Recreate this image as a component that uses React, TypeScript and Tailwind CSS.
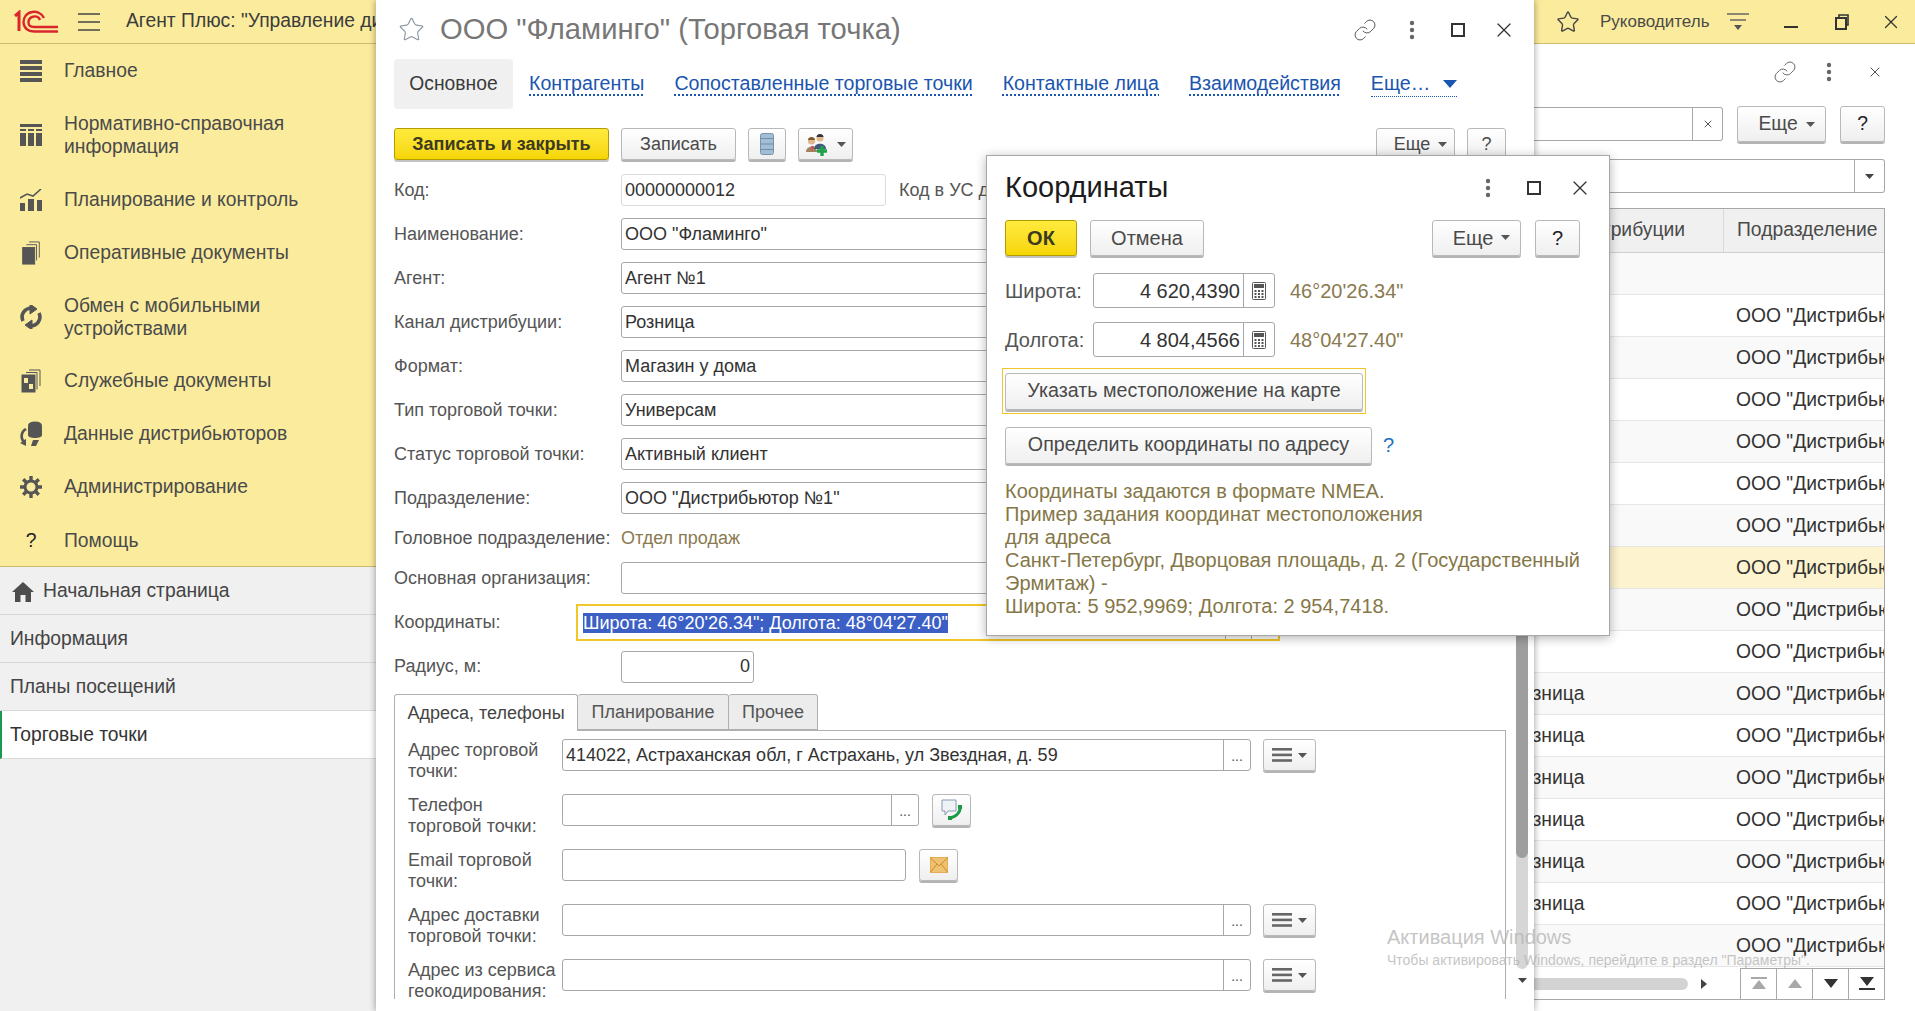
import { Link, Star, X } from "lucide-react";
import type { ReactNode } from "react";

const Dots = ({ className = "" }: { className?: string }) => (
  <svg width="6" height="20" viewBox="0 0 6 20" className={className}>
    <circle cx="3" cy="3" r="2.2" fill="#666" />
    <circle cx="3" cy="10" r="2.2" fill="#666" />
    <circle cx="3" cy="17" r="2.2" fill="#666" />
  </svg>
);

const Maximize = () => (
  <svg width="14" height="14" viewBox="0 0 14 14">
    <rect x="1" y="1" width="12" height="12" fill="none" stroke="#333" strokeWidth="2" />
  </svg>
);

const Caret = ({ color = "#555", w = 9, h = 5 }: { color?: string; w?: number; h?: number }) => (
  <svg width={w} height={h} viewBox="0 0 9 5" preserveAspectRatio="none" className="shrink-0">
    <path d="M0 0h9L4.5 5z" fill={color} />
  </svg>
);

const Logo = () => (
  <svg width="44" height="24" viewBox="0 0 44 24" fill="none" stroke="#d9262c" strokeWidth="2.4">
    <path d="M1 6 L5 2.5 V21" strokeWidth="3" />
    <path d="M30 8 C28 3 22 1 18 2 C12 3 9.5 8 9.5 12 C9.5 18 14 21.5 20 21.5 L44 21.5" />
    <path d="M26 10 C25 7 22 6 20 6.5 C16 7 14.5 10 14.5 12.5 C14.5 15.5 17 17 20 17 L44 17" />
  </svg>
);

const Burger = () => (
  <svg width="22" height="20" viewBox="0 0 22 20" stroke="#444" strokeWidth="1.4">
    <path d="M0 2h22M0 10h22M0 18h22" />
  </svg>
);

const icons: Record<string, ReactNode> = {
  main: (
    <svg width="22" height="22" viewBox="0 0 22 22" fill="#555">
      <rect y="0" width="22" height="4" />
      <rect y="6" width="22" height="4" />
      <rect y="12" width="22" height="4" />
      <rect y="18" width="22" height="4" />
    </svg>
  ),
  nsi: (
    <svg width="22" height="22" viewBox="0 0 22 22" fill="#555">
      <rect x="0" y="0" width="22" height="3" />
      <rect x="0" y="5" width="6" height="2" />
      <rect x="8" y="5" width="6" height="2" />
      <rect x="16" y="5" width="6" height="2" />
      <rect x="0" y="9" width="6" height="13" />
      <rect x="8" y="9" width="6" height="13" />
      <rect x="16" y="9" width="6" height="13" />
    </svg>
  ),
  plan: (
    <svg width="22" height="22" viewBox="0 0 22 22" fill="#555">
      <rect x="0" y="14" width="5" height="8" />
      <rect x="8" y="10" width="6" height="12" />
      <rect x="17" y="11" width="5" height="11" />
      <path d="M0 9 L7 5 L13 7 L21 0" fill="none" stroke="#555" strokeWidth="1.6" />
    </svg>
  ),
  docs: (
    <svg width="20" height="24" viewBox="0 0 20 26" fill="none" stroke="#555">
      <path d="M8 1h11v17M5 4h11v17" />
      <rect x="1" y="7" width="13" height="18" fill="#555" />
    </svg>
  ),
  sync: (
    <svg width="22" height="24" viewBox="0 0 22 24" fill="none" stroke="#555" strokeWidth="3.6">
      <path d="M3 16 C0 9 5 3 12 3" />
      <path d="M10 -1 L17 4 L10 9 z" fill="#555" strokeWidth="1" />
      <path d="M19 8 C22 15 17 21 10 21" />
      <path d="M12 15 L5 20 L12 25 z" fill="#555" strokeWidth="1" />
    </svg>
  ),
  service: (
    <svg width="20" height="24" viewBox="0 0 20 24" fill="none" stroke="#555">
      <path d="M8 1h11v16M5 3.5h11v17" />
      <rect x="1" y="6" width="13" height="17" fill="#555" />
      <rect x="3" y="9" width="4" height="5" fill="#fbec9d" stroke="none" />
      <rect x="8" y="15" width="4" height="5" fill="#fbec9d" stroke="none" />
    </svg>
  ),
  dist: (
    <svg width="24" height="26" viewBox="0 0 24 26" fill="#555">
      <ellipse cx="16" cy="4" rx="7" ry="3.5" />
      <path d="M9 5h14v9c0 2-3 3-7 3s-7-1-7-3z" />
      <path d="M6 7 C1 10 0 16 3 21 L1 22 L7 25 L7 18 L5 19 C3 15 4 11 8 9z" />
      <path d="M12 25 L14 19 L20 19 L17 25z" />
    </svg>
  ),
  admin: (
    <svg width="22" height="22" viewBox="0 0 22 22">
      <circle cx="11" cy="11" r="6" fill="none" stroke="#555" strokeWidth="3" />
      <path
        d="M11 0v5M11 17v5M0 11h5M17 11h5M3.2 3.2l3.5 3.5M15.3 15.3l3.5 3.5M3.2 18.8l3.5-3.5M15.3 6.7l3.5-3.5"
        stroke="#555"
        strokeWidth="3.4"
      />
    </svg>
  ),
};

const sections = [
  { icon: "main", h: "h-[53px]", title: ["Главное"] },
  { icon: "nsi", h: "h-[76px]", title: ["Нормативно-справочная", "информация"] },
  { icon: "plan", h: "h-[53px]", title: ["Планирование и контроль"] },
  { icon: "docs", h: "h-[53px]", title: ["Оперативные документы"] },
  { icon: "sync", h: "h-[75px]", title: ["Обмен с мобильными", "устройствами"] },
  { icon: "service", h: "h-[53px]", title: ["Служебные документы"] },
  { icon: "dist", h: "h-[53px]", title: ["Данные дистрибьюторов"] },
  { icon: "admin", h: "h-[53px]", title: ["Администрирование"] },
  { icon: "help", h: "h-[54px]", title: ["Помощь"] },
];

const Btn = ({
  children,
  className = "",
  primary = false,
}: {
  children: ReactNode;
  className?: string;
  primary?: boolean;
}) => (
  <div
    className={`flex items-center justify-center shrink-0 rounded-[3px] border-[1.5px] bg-linear-to-b whitespace-nowrap ${
      primary
        ? "border-[#b39b00] from-[#ffeb3c] to-[#f6d500] shadow-[0_2px_0_#c4c4c4] font-bold text-[#3c3a20]"
        : "border-[#b8b8b8] from-white to-[#efefef] shadow-[0_2px_0_#b4b4b4] text-[#4a4a4a]"
    } ${className}`}
  >
    {children}
  </div>
);

const MoreBtn = ({ className = "" }: { className?: string }) => (
  <Btn className={`gap-2 pl-[10px] ${className}`}>
    <span>Еще</span>
    <Caret />
  </Btn>
);

const Input = ({
  children,
  className = "",
}: {
  children?: ReactNode;
  className?: string;
}) => (
  <div
    className={`flex items-center h-[32px] shrink-0 rounded-[3px] border border-[#a8a8a8] bg-white px-[3px] text-[#333] whitespace-nowrap overflow-hidden ${className}`}
  >
    {children}
  </div>
);

const Row = ({
  label,
  h = 44,
  children,
}: {
  label: string;
  h?: number;
  children: ReactNode;
}) => (
  <div className="flex items-center" style={{ height: h }}>
    <div className="w-[227px] shrink-0 text-[#555] whitespace-nowrap">{label}</div>
    {children}
  </div>
);

const ListBtn = () => (
  <Btn className="w-[53px] h-[32px] gap-[6px]">
    <svg width="20" height="14" viewBox="0 0 20 14" fill="#666">
      <rect width="20" height="2.6" />
      <rect y="5.6" width="20" height="2.6" />
      <rect y="11.2" width="20" height="2.6" />
    </svg>
    <Caret />
  </Btn>
);

const PanelRow = ({
  label,
  top,
  children,
}: {
  label: [string, string];
  top: number;
  children: ReactNode;
}) => (
  <div className="flex h-[32px] items-start" style={{ marginTop: top }}>
    <div className="w-[167px] pl-[13px] shrink-0 text-[#555] leading-[21px] whitespace-nowrap pt-[1px]">
      {label[0]}
      <br />
      {label[1]}
    </div>
    {children}
  </div>
);

const Ellipsis = ({ className = "" }: { className?: string }) => (
  <div className={`flex items-end justify-center shrink-0 h-full pb-[7px] border-l border-[#a8a8a8] text-[14px] text-[#555] leading-none ${className}`}>
    ...
  </div>
);

const NavIcon = ({ d, color }: { d: string; color: string }) => (
  <div className="flex items-center justify-center w-[36px] h-full border-l border-[#a8a8a8]">
    <svg width="18" height="14" viewBox="0 0 18 14" fill={color}>
      <path d={d} />
    </svg>
  </div>
);

const rows = Array.from({ length: 16 }, (_, k) => k);

export default function App() {
  return (
    <div className="relative flex w-[1915px] h-[1011px] overflow-hidden bg-white text-[18px] font-['Liberation_Sans',Arial,sans-serif]">
      {/* левая панель */}
      <aside className="flex flex-col w-[376px] shrink-0 bg-[#f0f0f0] text-[19.3px]">
        <header className="flex items-center h-[44px] shrink-0 bg-[#fbec9d] border-b border-[#cdbd70] overflow-hidden">
          <div className="ml-[14px]">
            <Logo />
          </div>
          <div className="ml-[20px]">
            <Burger />
          </div>
          <span className="ml-[26px] text-[#3c3c3c] whitespace-nowrap">
            Агент Плюс: "Управление дистрибуцией"
          </span>
        </header>
        <nav className="flex flex-col h-[523px] shrink-0 bg-[#fbec9d] border-b border-[#c9b96a] text-[#4a4a4a]">
          {sections.map((s) => (
            <div key={s.icon} className={`flex items-center shrink-0 leading-[23px] ${s.h}`}>
              <div className="flex items-center justify-center w-[64px] shrink-0 pr-[2px]">
                {s.icon === "help" ? <span className="text-[#222]">?</span> : icons[s.icon]}
              </div>
              <div>
                {s.title.map((t) => (
                  <div key={t}>{t}</div>
                ))}
              </div>
            </div>
          ))}
        </nav>
        <div className="flex items-center h-[48px] pt-[2px] pl-[12px] gap-[9px] border-b border-[#d9d9d9] text-[#444]">
          <svg width="22" height="20" viewBox="0 0 22 20" fill="#4d4d4d">
            <path d="M11 0 L22 10 H19 V20 H13.5 V13 H8.5 V20 H3 V10 H0 z" />
          </svg>
          Начальная страница
        </div>
        <div className="flex items-center h-[48px] pt-[2px] pl-[10px] border-b border-[#d9d9d9] text-[#444]">Информация</div>
        <div className="flex items-center h-[48px] pt-[2px] pl-[10px] border-b border-[#d9d9d9] text-[#444]">Планы посещений</div>
        <div className="flex items-center h-[48px] pt-[2px] pl-[10px] border-b border-[#d9d9d9] bg-white text-[#333] border-l-2 border-l-[#1a9a50]">
          <span className="-ml-[2px]">Торговые точки</span>
        </div>
      </aside>

      {/* форма торговой точки */}
      <main className="relative z-10 flex flex-col w-[1158px] shrink-0 pl-[18px] bg-white shadow-[0_0_7px_rgba(0,0,0,0.4)]">
        <div className="flex items-center h-[59px] shrink-0">
          <Star size={27} strokeWidth={1} className="text-[#8a949c] ml-[4px]" />
          <span className="ml-[15px] text-[29.2px] text-[#777] whitespace-nowrap">
            ООО "Фламинго" (Торговая точка)
          </span>
          <div className="ml-auto flex items-center">
            <Link size={24} strokeWidth={1} className="text-[#555] mr-[32px]" />
            <Dots className="mr-[36px]" />
            <Maximize />
            <X size={24} strokeWidth={1.2} className="text-[#333] ml-[27px] mr-[18px]" />
          </div>
        </div>

        <div className="flex items-center h-[50px] shrink-0 text-[19.6px] text-[#1a55b0]">
          <div className="flex items-center justify-center w-[119px] h-full rounded-[4px] bg-[#f0f0f0] text-[#3a3a3a] text-[19.3px]">
            Основное
          </div>
          <a className="ml-[16px] underline decoration-dotted underline-offset-[4px] whitespace-nowrap">Контрагенты</a>
          <a className="ml-[30px] underline decoration-dotted underline-offset-[4px] whitespace-nowrap">Сопоставленные торговые точки</a>
          <a className="ml-[30px] underline decoration-dotted underline-offset-[4px] whitespace-nowrap">Контактные лица</a>
          <a className="ml-[30px] underline decoration-dotted underline-offset-[4px] whitespace-nowrap">Взаимодействия</a>
          <a className="ml-[30px] flex items-center gap-[13px] border-b border-dotted border-[#1a55b0] h-[26px] whitespace-nowrap">
            Еще…
            <Caret color="#1a55b0" w={14} h={8} />
          </a>
        </div>

        <div className="flex items-center h-[34px] mt-[18px] shrink-0">
          <Btn primary className="w-[215px] h-[32px]">Записать и закрыть</Btn>
          <Btn className="w-[115px] h-[32px] ml-[12px]">Записать</Btn>
          <Btn className="w-[38px] h-[32px] ml-[12px]">
            <svg width="14" height="22" viewBox="0 0 14 22">
              <rect x="0.5" y="0.5" width="13" height="21" rx="2" fill="#a3bdd3" stroke="#7394b2" />
              <path d="M1 5.5h12M1 11h12M1 16.5h12" stroke="#6d8eab" strokeWidth="1.2" />
            </svg>
          </Btn>
          <Btn className="w-[55px] h-[32px] ml-[12px] gap-[8px]">
            <svg width="24" height="24" viewBox="0 0 24 24">
              <path d="M1 20 C1 13 12 13 12 20z" fill="#a5805f" />
              <path d="M6 14l1.5 5 1.5-5z" fill="#c0564a" />
              <circle cx="6.5" cy="9" r="3.6" fill="#e2b88f" />
              <path d="M3 8 C3 4 10 4 10 8z" fill="#7c5a2c" />
              <path d="M9 17 C9 10 21 10 21 17z" fill="#41597d" />
              <circle cx="15" cy="6" r="3.6" fill="#e2b88f" />
              <path d="M11.5 5 C11.5 1 18.5 1 18.5 5z" fill="#2f3440" />
              <path d="M17 14v10M12 19h10" stroke="#1fa34a" strokeWidth="3.4" />
            </svg>
            <Caret />
          </Btn>
          <MoreBtn className="w-[79px] h-[32px] ml-auto" />
          <Btn className="w-[39px] h-[32px] ml-[12px] mr-[28px]">?</Btn>
        </div>

        <div className="flex flex-1 min-h-0 mt-[7px]">
          <div className="flex flex-col w-[1112px] shrink-0">
            <Row label="Код:">
              <Input className="w-[265px] border-[#dcdcdc]">00000000012</Input>
              <span className="ml-[13px] text-[#555] whitespace-nowrap">Код в УС дистрибьютора:</span>
            </Row>
            <Row label="Наименование:"><Input className="w-[660px]">ООО "Фламинго"</Input></Row>
            <Row label="Агент:"><Input className="w-[660px]">Агент №1</Input></Row>
            <Row label="Канал дистрибуции:"><Input className="w-[660px]">Розница</Input></Row>
            <Row label="Формат:"><Input className="w-[660px]">Магазин у дома</Input></Row>
            <Row label="Тип торговой точки:"><Input className="w-[660px]">Универсам</Input></Row>
            <Row label="Статус торговой точки:"><Input className="w-[660px]">Активный клиент</Input></Row>
            <Row label="Подразделение:"><Input className="w-[660px]">ООО "Дистрибьютор №1"</Input></Row>
            <Row label="Головное подразделение:" h={36}>
              <span className="text-[#8a7a50] whitespace-nowrap">Отдел продаж</span>
            </Row>
            <Row label="Основная организация:"><Input className="w-[660px]" /></Row>
            <div className="flex items-center h-[45px]">
              <div className="w-[182px] shrink-0 text-[#555]">Координаты:</div>
              <div className="flex items-center justify-between w-[704px] h-[37px] pl-[5px] pr-[1px] border-2 border-[#f2c626] whitespace-nowrap">
                <span className="bg-[#3c5fc6] text-white leading-[20px]">Широта: 46°20'26.34"; Долгота: 48°04'27.40"</span>
                <div className="flex h-full">
                  <div className="w-[26px] border-l border-[#a8a8a8]" />
                  <div className="w-[26px] border-l border-[#a8a8a8]" />
                </div>
              </div>
            </div>
            <Row label="Радиус, м:" h={43}>
              <Input className="w-[133px] justify-end">0</Input>
            </Row>

            <div className="flex h-[36px] mt-[6px] shrink-0 text-[#555]">
              <div className="relative z-10 flex items-center justify-center w-[184px] h-[37px] rounded-t-[3px] border border-b-0 border-[#b0b0b0] bg-white text-[#444]">
                Адреса, телефоны
              </div>
              <div className="flex items-center justify-center w-[151px] rounded-t-[3px] border border-l-0 border-[#b0b0b0] bg-[#ececec]">
                Планирование
              </div>
              <div className="flex items-center justify-center w-[89px] rounded-t-[3px] border border-l-0 border-[#b0b0b0] bg-[#ececec]">
                Прочее
              </div>
            </div>
            <div className="flex flex-col h-[269px] overflow-hidden border-t border-x border-[#b0b0b0]">
              <PanelRow label={["Адрес торговой", "точки:"]} top={8}>
                <Input className="w-[689px] !pr-0 text-[#333]">
                  <span className="flex-1">414022, Астраханская обл, г Астрахань, ул Звездная, д. 59</span>
                  <Ellipsis className="w-[27px]" />
                </Input>
                <div className="ml-[12px]"><ListBtn /></div>
              </PanelRow>
              <PanelRow label={["Телефон", "торговой точки:"]} top={23}>
                <Input className="w-[357px] !p-0 justify-end">
                  <Ellipsis className="w-[27px]" />
                </Input>
                <Btn className="w-[39px] h-[32px] ml-[13px]">
                  <svg width="24" height="24" viewBox="0 0 24 24" fill="none">
                    <path d="M2 2h14v11H8l-3 4v-4H2z" fill="#eef3f8" stroke="#8a9bb0" />
                    <path d="M20 8 C21 14 16 19 10 20" stroke="#1b9a45" strokeWidth="3" />
                    <path d="M18 7h4v4h-4zM8 18h4v4H8z" fill="#1b9a45" />
                  </svg>
                </Btn>
              </PanelRow>
              <PanelRow label={["Email торговой", "точки:"]} top={23}>
                <Input className="w-[344px]" />
                <Btn className="w-[39px] h-[32px] ml-[13px]">
                  <svg width="18" height="16" viewBox="0 0 18 16">
                    <rect width="18" height="16" rx="1" fill="#efc271" stroke="#d69b3a" />
                    <path d="M0.5 1 L9 9 L17.5 1 M0.5 15 L7 7 M17.5 15 L11 7" fill="none" stroke="#c98b2a" />
                  </svg>
                </Btn>
              </PanelRow>
              <PanelRow label={["Адрес доставки", "торговой точки:"]} top={23}>
                <Input className="w-[689px] !p-0 justify-end">
                  <Ellipsis className="w-[27px]" />
                </Input>
                <div className="ml-[12px]"><ListBtn /></div>
              </PanelRow>
              <PanelRow label={["Адрес из сервиса", "геокодирования:"]} top={23}>
                <Input className="w-[689px] !p-0 justify-end">
                  <Ellipsis className="w-[27px]" />
                </Input>
                <div className="ml-[12px]"><ListBtn /></div>
              </PanelRow>
            </div>
          </div>

          {/* вертикальный скролл */}
          <div className="flex flex-col items-center w-[12px] ml-[10px] h-[823px] shrink-0">
            <div className="flex-1 w-full rounded-full bg-[#d6d6d6]">
              <div className="h-[690px] rounded-full bg-[#9e9e9e]" />
            </div>
            <div className="flex items-center h-[22px]">
              <Caret color="#444" />
            </div>
          </div>
        </div>
      </main>

      {/* список справа */}
      <section className="flex flex-col flex-1 min-w-0 text-[19.3px]">
        <header className="flex items-center h-[44px] shrink-0 pl-[22px] bg-[#fbec9d] border-b border-[#cdbd70]">
          <Star size={24} strokeWidth={1.4} className="text-[#444]" />
          <span className="ml-[20px] text-[17px] text-[#4a4a4a]">Руководитель</span>
          <svg width="22" height="24" viewBox="0 0 22 24" className="ml-[17px]" stroke="#666" strokeWidth="1.3">
            <path d="M0 4h22M3 10h16" />
            <path d="M7 15h8l-4 5z" fill="#555" stroke="none" />
          </svg>
          <svg width="14" height="14" viewBox="0 0 14 14" className="ml-[35px]" stroke="#333" strokeWidth="2">
            <path d="M0 12h14" />
          </svg>
          <svg width="14" height="16" viewBox="0 0 14 16" className="ml-[37px]" fill="none" stroke="#333" strokeWidth="1.6">
            <path d="M4 3V1h9v10h-2" />
            <rect x="1" y="4" width="10" height="11" strokeWidth="2" />
          </svg>
          <X size={22} strokeWidth={1.3} className="ml-[31px] text-[#333]" />
        </header>

        <div className="flex items-center justify-end h-[50px] pt-[6px] pr-[32px] shrink-0">
          <Link size={24} strokeWidth={1} className="text-[#666] mr-[29px]" />
          <Dots className="mr-[35px]" />
          <X size={16} strokeWidth={1.4} className="text-[#444]" />
        </div>

        <div className="flex items-center h-[36px] mt-[12px] shrink-0">
          <div className="flex items-center justify-end w-[189px] h-[34px] rounded-r-[3px] border border-l-0 border-[#a8a8a8]">
            <div className="flex items-center justify-center w-[30px] h-full border-l border-[#a8a8a8]">
              <X size={12} strokeWidth={2} className="text-[#555]" />
            </div>
          </div>
          <MoreBtn className="w-[89px] h-[36px] ml-[14px]" />
          <Btn className="w-[45px] h-[36px] ml-[14px] text-[#222]">?</Btn>
        </div>

        <div className="flex items-center justify-end w-[351px] h-[34px] mt-[17px] shrink-0 rounded-r-[3px] border border-l-0 border-[#a8a8a8]">
          <div className="flex items-center justify-center w-[30px] h-full border-l border-[#a8a8a8]">
            <Caret color="#444" />
          </div>
        </div>

        <div className="flex flex-col w-[351px] h-[792px] mt-[15px] shrink-0 border-r border-y border-[#a8a8a8] overflow-hidden">
          <div className="flex items-center h-[44px] shrink-0 bg-[#f0f0f0] border-b border-[#d0d0d0] text-[#4a4a4a]">
            <div className="flex items-center justify-end w-[189px] h-full pr-[38px] whitespace-nowrap">дистрибуции</div>
            <div className="flex items-center flex-1 h-full pl-[13px] border-l border-[#d8d8d8] whitespace-nowrap">Подразделение</div>
          </div>
          <div className="h-[42px] shrink-0 bg-[#f9f9f9] border-b border-[#e6e6e6]" />
          {rows.map((k) => (
            <div
              key={k}
              className={`flex items-center h-[42px] shrink-0 pt-[1px] border-b border-[#e6e6e6] text-[#333] whitespace-nowrap overflow-hidden ${
                k === 6 ? "bg-[#fdf3cf]" : k % 2 === 1 ? "bg-[#f9f9f9]" : "bg-white"
              }`}
            >
              <div className="w-[189px] shrink-0">
                {k >= 9 && k <= 14 ? <span className="block -ml-[24px]">Розница</span> : null}
              </div>
              <span className="pl-[13px]">ООО "Дистрибьютор №1"</span>
            </div>
          ))}
          <div className="flex items-center flex-1 min-h-0 mt-[1px] bg-white">
            <div className="w-[154px] h-[12px] rounded-r-full bg-[#d3d3d3]" />
            <svg width="6" height="10" viewBox="0 0 6 10" className="ml-[13px]">
              <path d="M0 0l6 5-6 5z" fill="#444" />
            </svg>
            <div className="flex h-full ml-auto border-t border-[#a8a8a8]">
              <NavIcon d="M1 0h16v2H1zM9 3l7 9H2z" color="#a8a8a8" />
              <NavIcon d="M9 2l7 9H2z" color="#a8a8a8" />
              <NavIcon d="M2 2h14l-7 9z" color="#333" />
              <NavIcon d="M2 0h14l-7 9zM1 11h16v2H1z" color="#333" />
            </div>
          </div>
        </div>
      </section>

      {/* окно координат */}
      <div className="absolute z-20 left-[986px] top-[155px] flex flex-col w-[624px] h-[481px] px-[18px] bg-white border border-[#a8a8a8] shadow-[0_2px_10px_rgba(0,0,0,0.3)] text-[20px]">
        <div className="flex items-center h-[63px] shrink-0">
          <span className="text-[29px] text-[#1c1c1c]">Координаты</span>
          <div className="ml-auto flex items-center">
            <Dots className="mr-[36px]" />
            <Maximize />
            <X size={24} strokeWidth={1.2} className="text-[#333] ml-[27px] -mr-[1px]" />
          </div>
        </div>
        <div className="flex items-center h-[37px] shrink-0">
          <Btn primary className="w-[72px] h-[36px]">ОК</Btn>
          <Btn className="w-[114px] h-[36px] ml-[13px]">Отмена</Btn>
          <MoreBtn className="w-[89px] h-[36px] ml-auto" />
          <Btn className="w-[45px] h-[36px] ml-[14px] mr-[11px] text-[#222]">?</Btn>
        </div>
        <div className="flex items-center h-[35px] mt-[17px] shrink-0">
          <span className="w-[88px] text-[#555]">Широта:</span>
          <Input className="w-[182px] h-[35px] !p-0 justify-end text-[#333]">
            <span className="pr-[3px]">4 620,4390</span>
            <CalcIcon />
          </Input>
          <span className="ml-[15px] text-[#8a7a50]">46°20'26.34"</span>
        </div>
        <div className="flex items-center h-[35px] mt-[14px] shrink-0">
          <span className="w-[88px] text-[#555]">Долгота:</span>
          <Input className="w-[182px] h-[35px] !p-0 justify-end text-[#333]">
            <span className="pr-[3px]">4 804,4566</span>
            <CalcIcon />
          </Input>
          <span className="ml-[15px] text-[#8a7a50]">48°04'27.40"</span>
        </div>
        <div className="flex items-center justify-center w-[364px] h-[46px] -ml-[3px] mt-[11px] shrink-0 border border-[#f2c626]">
          <Btn className="w-[358px] h-[37px] text-[19.7px]">Указать местоположение на карте</Btn>
        </div>
        <div className="flex items-center h-[38px] mt-[12px] shrink-0">
          <Btn className="w-[367px] h-[37px] text-[19.7px]">Определить координаты по адресу</Btn>
          <span className="ml-[11px] text-[#1a72b8]">?</span>
        </div>
        <div className="mt-[16px] leading-[23px] text-[#857747]">
          Координаты задаются в формате NMEA.
          <br />
          Пример задания координат местоположения
          <br />
          для адреса
          <br />
          Санкт-Петербург, Дворцовая площадь, д. 2 (Государственный Эрмитаж) -
          <br />
          Широта: 5 952,9969; Долгота: 2 954,7418.
        </div>
      </div>

      {/* водяной знак */}
      <div className="absolute z-30 left-[1387px] top-[925px] text-[#b5b5b5]/80 whitespace-nowrap pointer-events-none">
        <div className="text-[20px] leading-[24px]">Активация Windows</div>
        <div className="text-[14px] leading-[22px]">Чтобы активировать Windows, перейдите в раздел "Параметры".</div>
      </div>
    </div>
  );
}

function CalcIcon() {
  return (
    <div className="flex items-center justify-center w-[31px] h-full border-l border-[#a8a8a8] shrink-0">
      <svg width="14" height="18" viewBox="0 0 14 18">
        <rect x="0.5" y="0.5" width="13" height="17" rx="1" fill="#fff" stroke="#555" />
        <rect x="2" y="2" width="10" height="4" fill="#555" />
        <path
          d="M2.5 8h2v2h-2zM6 8h2v2H6zM9.5 8h2v2h-2zM2.5 11h2v2h-2zM6 11h2v2H6zM9.5 11h2v2h-2zM2.5 14h2v2h-2zM6 14h2v2H6zM9.5 14h2v2h-2z"
          fill="#555"
        />
      </svg>
    </div>
  );
}
